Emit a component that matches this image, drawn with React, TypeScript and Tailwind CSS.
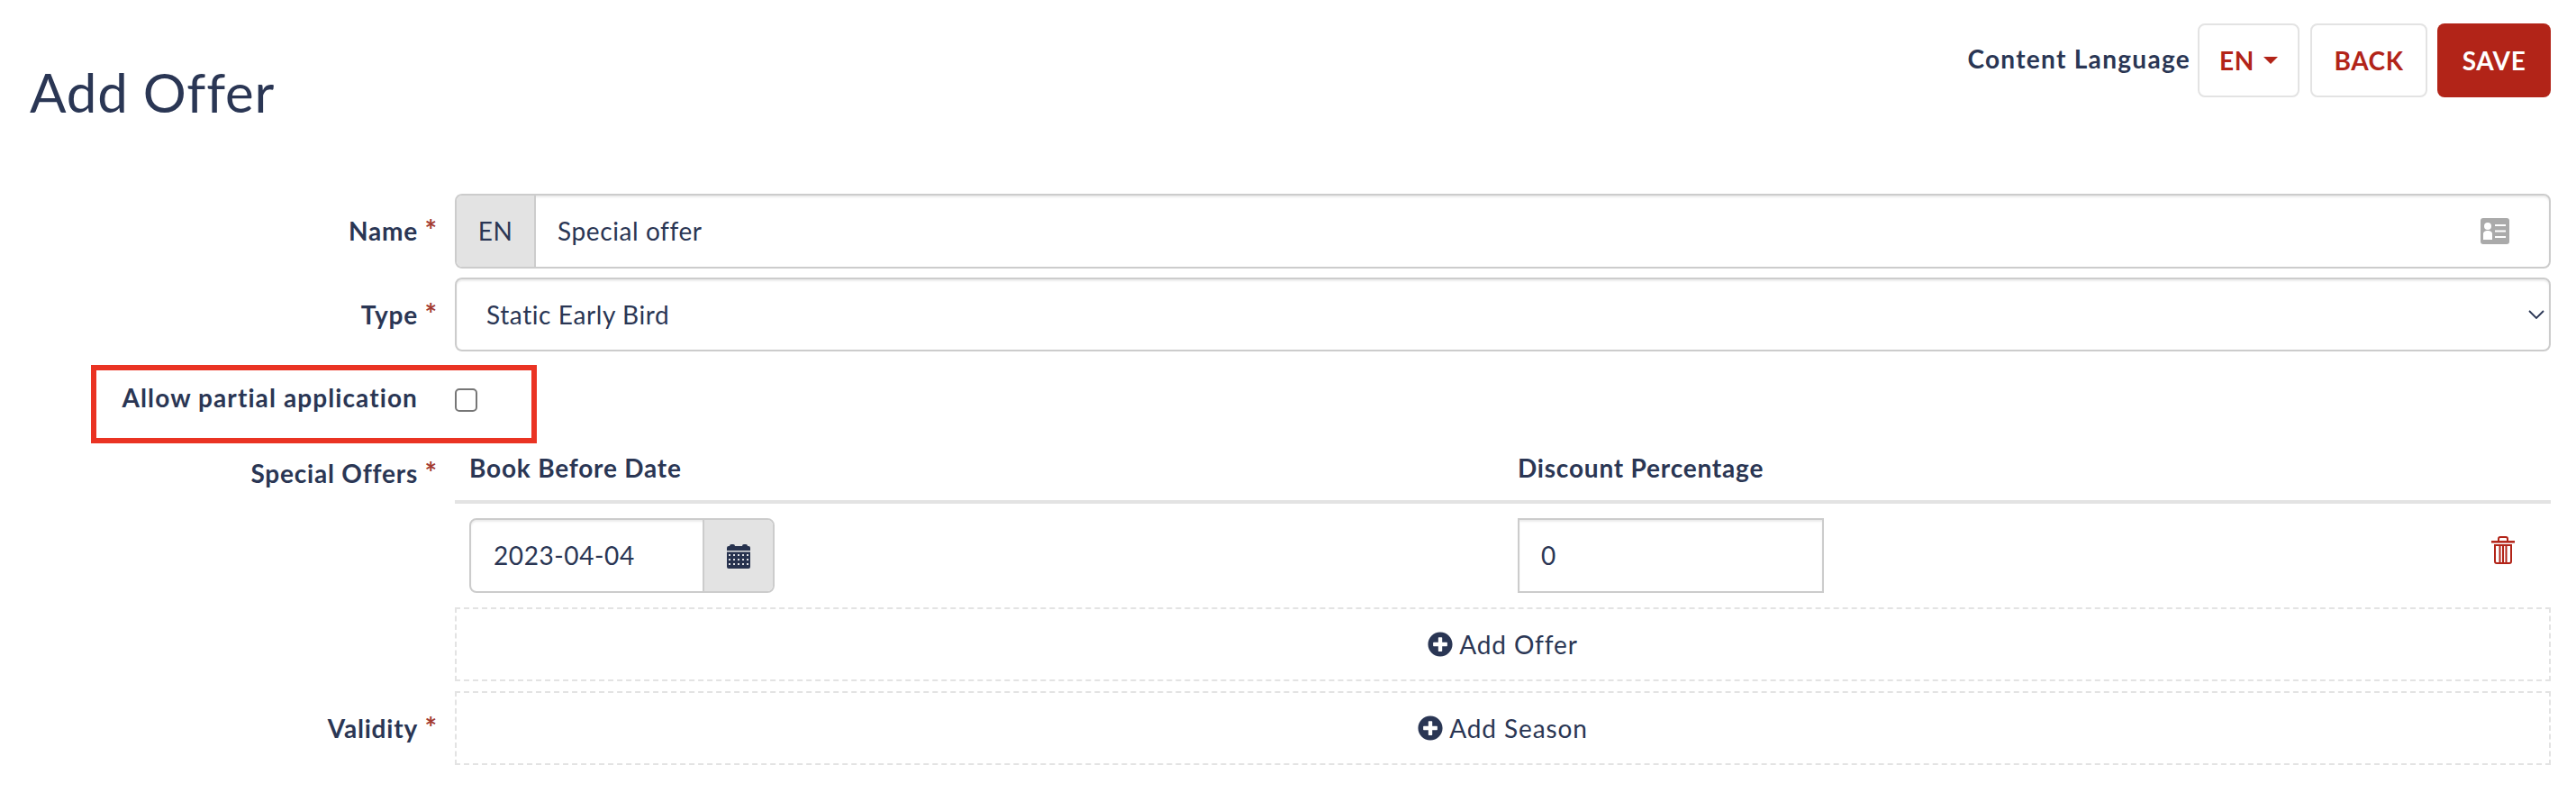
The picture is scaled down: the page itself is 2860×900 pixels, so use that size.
import { FaPlusCircle } from "react-icons/fa";

const font = "font-['Lato','Liberation_Sans',sans-serif]";
const inputShadow = "shadow-[inset_0_2px_2px_rgba(0,0,0,0.075)]";

function Label({ text, required = true }: { text: string; required?: boolean }) {
  return (
    <label className="flex w-[485px] shrink-0 justify-end text-[28px] font-bold tracking-[0.8px]">
      <span>{text}</span>
      <span className="w-[21px] text-right text-[32px] leading-[42px] tracking-normal text-[#a33a32]">{required ? "*" : ""}</span>
    </label>
  );
}

function CardIcon() {
  return (
    <svg viewBox="0 0 32 29" className="mr-[44px] h-[29px] w-8">
      <rect width="32" height="29" rx="3" fill="#aaaaaa" />
      <circle cx="8" cy="9" r="4" fill="#fff" />
      <path d="M3 24v-6c0-3 2-4 5-4s5 1 5 4v6z" fill="#fff" />
      <path d="M16 8h12M16 14.500h12M16 21h12" stroke="#fff" strokeWidth="2" />
    </svg>
  );
}

function CalendarIcon() {
  const cols = [3, 8, 13, 18, 23];
  const rows = [12, 17, 22];
  return (
    <svg viewBox="0 0 28 28" className="h-7 w-7" fill="#27324e">
      <path d="M1 5a2 2 0 0 1 2-2h1a2 2 0 0 1 2-2h2a2 2 0 0 1 2 2h8a2 2 0 0 1 2-2h2a2 2 0 0 1 2 2h1a2 2 0 0 1 2 2v3H1z" />
      <path d="M1 9.500h26V26a2 2 0 0 1-2 2H3a2 2 0 0 1-2-2z" />
      <g fill="#dfe0e4">
        {rows.map((y) => cols.map((x) => <rect key={`${x}-${y}`} x={x} y={y} width="2" height="2" />))}
      </g>
    </svg>
  );
}

function TrashIcon() {
  return (
    <svg viewBox="0 0 26 31" className="h-[31px] w-[26px]" fill="none" stroke="#b22418" strokeWidth="2">
      <path d="M0 6.300h26" strokeWidth="2.500" />
      <path d="M8 6V3a2 2 0 0 1 2-2h6a2 2 0 0 1 2 2v3" />
      <path d="M4 10v18a2 2 0 0 0 2 2h14a2 2 0 0 0 2-2V10z" />
      <path d="M9.500 10v20M13 10v20M16.500 10v20" />
    </svg>
  );
}

function AddButton({ text }: { text: string }) {
  return (
    <div className="flex h-[82px] flex-1 items-center justify-center gap-[7px] border-2 border-dashed border-[#e3e3e3] text-[28px] tracking-[0.9px]">
      <FaPlusCircle className="h-7 w-7" />
      <span>{text}</span>
    </div>
  );
}

export default function App() {
  return (
    <div className={`${font} relative h-[900px] w-[2860px] bg-white pr-[28px] tracking-[0.6px] text-[#2a3654]`}>
      {/* Page header */}
      <div className="flex h-[215px] items-start justify-between pl-[33px]">
        <h1 className="mt-[66px] text-[60px] leading-[72px] font-normal tracking-[0.8px]">Add Offer</h1>
        <div className="mt-[26px] flex items-center">
          <span className="mr-2 -translate-y-[2px] text-[28px] font-bold tracking-[1.3px]">Content Language</span>
          <button className="flex h-[82px] w-[113px] items-center justify-center gap-[10px] rounded-lg border-2 border-[#e3e3e3] text-[28px] font-bold text-[#b22418]">
            EN
            <span className="h-0 w-0 border-x-[8px] border-t-[8px] border-x-transparent border-t-[#b22418]" />
          </button>
          <button className="ml-3 h-[82px] w-[130px] rounded-lg border-2 border-[#e3e3e3] text-[28px] font-bold text-[#b22418]">BACK</button>
          <button className="ml-[11px] h-[82px] w-[126px] rounded-lg bg-[#b22418] text-[28px] font-bold text-white">SAVE</button>
        </div>
      </div>

      {/* Name */}
      <div className="flex items-center gap-5">
        <div className="pb-[2px]">
          <Label text="Name" />
        </div>
        <div className={`flex h-[83px] flex-1 items-center rounded-lg border-2 border-[#cccccc] text-[28px] ${inputShadow}`}>
          <span className="flex h-full w-[88px] items-center justify-center rounded-l-md border-r-2 border-[#cccccc] bg-[#e3e3e3] pb-[2px]">EN</span>
          <span className="flex-1 pb-[2px] pl-6">Special offer</span>
          <CardIcon />
        </div>
      </div>

      {/* Type */}
      <div className="mt-[10px] flex items-center gap-5">
        <Label text="Type" />
        <div className={`flex h-[82px] flex-1 items-center rounded-lg border-2 border-[#cccccc] pr-[5px] pl-[33px] text-[28px] ${inputShadow}`}>
          <span className="flex-1">Static Early Bird</span>
          <svg viewBox="0 0 18 10" className="h-[10px] w-[18px]" fill="none" stroke="#2a3654" strokeWidth="1.800">
            <path d="M1 1l8 8 8-8" />
          </svg>
        </div>
      </div>

      {/* Allow partial application */}
      <div className="mt-[34px] flex items-start gap-5">
        <label className="w-[464px] shrink-0 text-right text-[28px] leading-[34px] font-bold tracking-[1.1px]">Allow partial application</label>
        <span className="mt-[7px] ml-[21px] h-[26px] w-[25px] rounded-[5px] border-2 border-[#767676]" />
      </div>

      {/* Special offers */}
      <div className="mt-[44px] flex gap-5">
        <div className="pt-[2px]">
          <Label text="Special Offers" />
        </div>
        <div className="flex-1">
          <div className="flex h-[57px] border-b-4 border-[#e3e3e3] pl-4 text-[28px] leading-[34px] font-bold tracking-[0.8px]">
            <span className="w-[1164px]">Book Before Date</span>
            <span>Discount Percentage</span>
          </div>
          <div className="mt-4 flex h-[83px] items-center pl-4">
            <div className={`flex h-[83px] w-[339px] items-center rounded-lg border-2 border-[#cccccc] text-[28px] ${inputShadow}`}>
              <span className="flex-1 pb-[2px] pl-[25px]">2023-04-04</span>
              <span className="flex h-full w-[78px] items-center justify-center rounded-r-md border-l-2 border-[#cccccc] bg-[#e3e3e3]">
                <CalendarIcon />
              </span>
            </div>
            <div className={`ml-[825px] flex h-[83px] w-[340px] items-center border-2 border-[#cccccc] pb-[2px] pl-6 text-[28px] ${inputShadow}`}>0</div>
            <span className="mr-10 mb-3 ml-auto">
              <TrashIcon />
            </span>
          </div>
          <div className="mt-4 flex">
            <AddButton text="Add Offer" />
          </div>
        </div>
      </div>

      {/* Validity */}
      <div className="mt-[11px] flex items-center gap-5">
        <Label text="Validity" />
        <AddButton text="Add Season" />
      </div>

      {/* Review annotation drawn over the form */}
      <div className="absolute top-[405px] left-[101px] h-[87px] w-[495px] border-[6px] border-[#ea3323]" />
    </div>
  );
}
